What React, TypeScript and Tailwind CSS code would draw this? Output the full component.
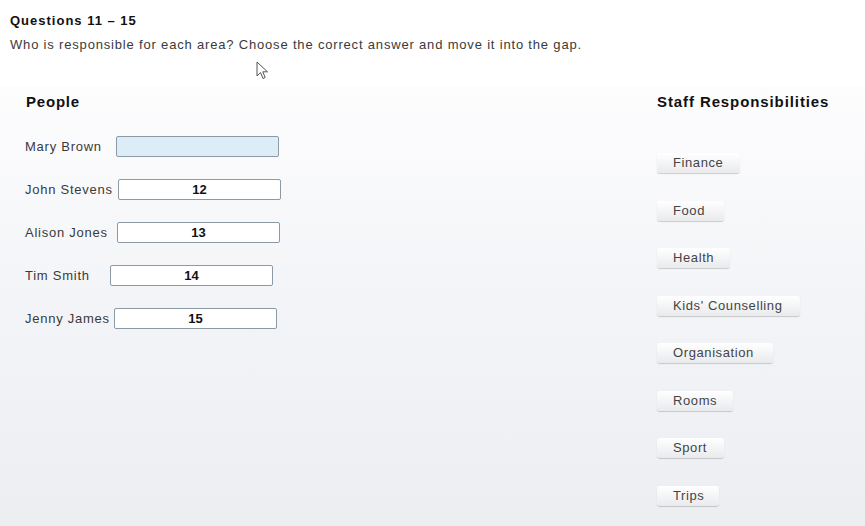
import React from 'react'

const PEOPLE: { name: string; value: string; label: string }[] = [
  { name: 'Mary Brown', value: '', label: 'w-[91px]' },
  { name: 'John Stevens', value: '12', label: 'w-[93px]' },
  { name: 'Alison Jones', value: '13', label: 'w-[92px]' },
  { name: 'Tim Smith', value: '14', label: 'w-[85px]' },
  { name: 'Jenny James', value: '15', label: 'w-[89px]' },
]

const AREAS: { label: string; w: string }[] = [
  { label: 'Finance', w: 'w-[83px]' },
  { label: 'Food', w: 'w-[67px]' },
  { label: 'Health', w: 'w-[73px]' },
  { label: "Kids' Counselling", w: 'w-[143px]' },
  { label: 'Organisation', w: 'w-[116px]' },
  { label: 'Rooms', w: 'w-[76px]' },
  { label: 'Sport', w: 'w-[67px]' },
  { label: 'Trips', w: 'w-[62px]' },
]

function Pointer() {
  return (
    <svg width="14" height="20" viewBox="0 0 14 20" className="absolute left-[256px] top-[61px]">
      <path d="M1 1 L1 15 L4.5 11.5 L7 17.5 L9.2 16.5 L6.8 10.8 L11.5 10.8 Z" fill="white" stroke="#555" strokeWidth="1" strokeLinejoin="round" />
    </svg>
  )
}

export default function App() {
  return (
    <div className="relative w-[865px] h-[526px] overflow-hidden bg-white font-['Liberation_Sans',Arial,sans-serif] text-[#333]">
      <div className="px-[10px] pt-[13px] h-[86px]">
        <div className="text-[13px] font-bold text-[#111] tracking-[1px] leading-[16px]">Questions 11 – 15</div>
        <div className="mt-[7px] text-[13px] tracking-[0.82px] leading-[18px] text-[#3a3a3a]">
          Who is responsible for each area? Choose the correct answer and move it into the gap.
        </div>
      </div>
      <Pointer />

      <div className="flex h-[440px] bg-gradient-to-b from-[#fdfdfe] via-[#f3f4f7] to-[#eceef2]">
        <div className="flex-1 pl-[25px] pt-[6px]">
          <div className="text-[15px] font-bold text-[#111] tracking-[0.8px] leading-[20px] pl-[1px]">People</div>
          <div className="mt-[24px] flex flex-col gap-[22px]">
            {PEOPLE.map((p) => (
              <div key={p.name} className="flex items-center h-[21px]">
                <span className={'shrink-0 text-[13px] tracking-[0.75px] text-[#3a3a3a] whitespace-nowrap ' + p.label}>{p.name}</span>
                <div
                  className={
                    'w-[163px] h-[21px] rounded-[2px] border border-[#8b9aa4] flex items-center justify-center text-[13px] font-bold text-[#111] ' +
                    (p.value ? 'bg-white' : 'bg-[#dcedf8]')
                  }
                >
                  {p.value}
                </div>
              </div>
            ))}
          </div>
        </div>

        <div className="w-[208px] pt-[6px]">
          <div className="text-[15px] font-bold text-[#111] tracking-[0.9px] leading-[20px]">Staff Responsibilities</div>
          <div className="mt-[41px] flex flex-col gap-[27.5px]">
            {AREAS.map((a) => (
              <div
                key={a.label}
                className={
                  'h-[20px] rounded-[3px] bg-gradient-to-b from-white to-[#e9eaec] shadow-[0_1px_1px_rgba(0,0,0,0.18)] flex items-center pl-[16px] text-[13px] tracking-[0.6px] text-[#444] whitespace-nowrap ' +
                  a.w
                }
              >
                {a.label}
              </div>
            ))}
          </div>
        </div>
      </div>
    </div>
  )
}
